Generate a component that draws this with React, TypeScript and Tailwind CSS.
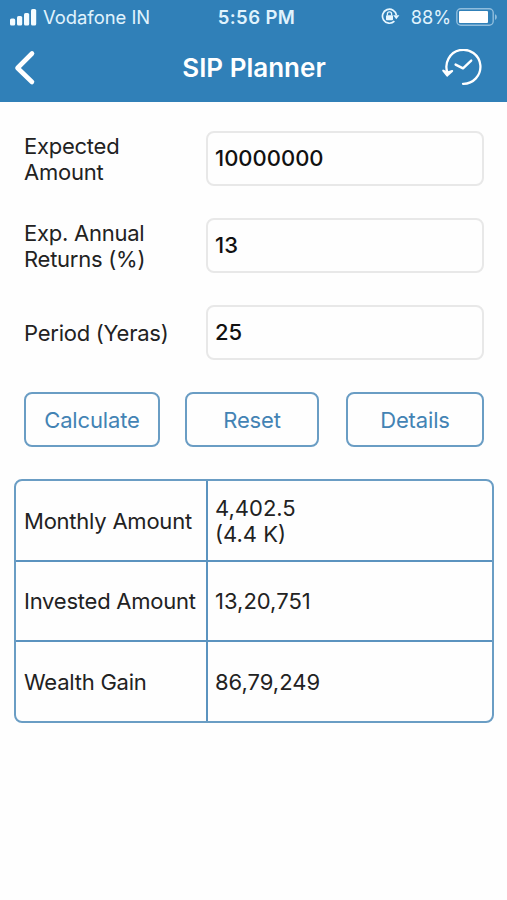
import { useState } from 'react';

interface Field {
  label: string;
  value: string;
}

const initialFields: Field[] = [
  { label: 'Expected Amount', value: '10000000' },
  { label: 'Exp. Annual Returns (%)', value: '13' },
  { label: 'Period (Yeras)', value: '25' },
];

const results = [
  { label: 'Monthly Amount', lines: ['4,402.5', '(4.4 K)'] },
  { label: 'Invested Amount', lines: ['13,20,751'] },
  { label: 'Wealth Gain', lines: ['86,79,249'] },
];

function StatusBar() {
  return (
    <div className="grid h-[34px] grid-cols-[1fr_auto_1fr] items-center pl-[10px] pr-[9px] text-[18px] leading-none text-[#e0f3fd]">
      <div className="flex items-center gap-[6px]">
        <svg width="27" height="17" viewBox="0 0 27 17" fill="#f4fcff">
          <rect x="0" y="9.5" width="5.2" height="7" rx="1.6" />
          <rect x="7" y="7" width="5.2" height="9.5" rx="1.6" />
          <rect x="14" y="4" width="5.2" height="12.5" rx="1.6" />
          <rect x="21" y="0" width="5.2" height="16.5" rx="1.6" />
        </svg>
        <span className="whitespace-nowrap text-[18.4px]">Vodafone IN</span>
      </div>
      <span className="pl-[5px] text-[18.5px] font-semibold tracking-[0.4px]">5:56 PM</span>
      <div className="flex items-center justify-end">
        <svg width="19" height="17" viewBox="0 0 19 17" fill="none">
          <path d="M13.4 13.2A7 7 0 1 1 15.4 7.2" stroke="#e6f6ff" strokeWidth="1.7" />
          <path d="M12.2 7.2h6.2l-3.1 4z" fill="#e6f6ff" />
          <rect x="5" y="7.2" width="7" height="5" rx="0.8" fill="#e6f6ff" />
          <path d="M6.4 7.5V5.9a2.1 2.1 0 0 1 4.2 0v1.6" stroke="#e6f6ff" strokeWidth="1.3" />
        </svg>
        <span className="ml-[11px] text-[18.2px]">88%</span>
        <svg className="ml-[5px]" width="42" height="18" viewBox="0 0 42 18" fill="none">
          <rect x="0.8" y="0.8" width="36.4" height="16.4" rx="4" stroke="#8fbddd" strokeWidth="1.4" />
          <rect x="3" y="3" width="29" height="12" rx="1" fill="#fff" />
          <path d="M39 6.2c2.4.8 2.4 4.8 0 5.6z" fill="#8fbddd" />
        </svg>
      </div>
    </div>
  );
}

function NavBar() {
  return (
    <div className="grid h-[67px] grid-cols-[1fr_auto_1fr] items-center pl-[14px] pr-[24px] text-white">
      <button aria-label="Back" className="justify-self-start">
        <svg width="22" height="36" viewBox="0 0 22 36" fill="none">
          <path d="M18 3.5 3.5 18 18 32" stroke="#fff" strokeWidth="4.6" strokeLinecap="round" strokeLinejoin="round" />
        </svg>
      </button>
      <h1 className="pl-[11px] text-[26px] font-semibold leading-none">SIP Planner</h1>
      <button aria-label="History" className="justify-self-end">
        <svg width="42" height="38" viewBox="0 0 42 38" fill="none" stroke="#fff" strokeLinecap="round" strokeLinejoin="round">
          <path d="M6.4 23.5A17 17 0 1 1 22 34.8" strokeWidth="2.3" />
          <path d="M2.2 21.6 6.2 26.6l5-4.6-4.8 1.4z" strokeWidth="2" fill="#fff" />
          <path d="M14.6 15.6 22 19.4 30.2 11.6" strokeWidth="2.4" />
        </svg>
      </button>
    </div>
  );
}

function ActionButton({ label, onClick }: { label: string; onClick?: () => void }) {
  return (
    <button onClick={onClick} className="h-[55px] rounded-[8px] border-2 border-[#6a9dc4] tracking-[-0.15px] text-[#4383b4]">
      {label}
    </button>
  );
}

export default function App() {
  const [fields, setFields] = useState(initialFields);

  const updateField = (index: number, value: string) => {
    setFields(fields.map((field, i) => (i === index ? { ...field, value } : field)));
  };

  return (
    <div className="min-h-screen w-full bg-[#fefefe] font-['Inter',sans-serif] text-[22px] leading-[26px] text-[#222]">
      <header className="h-[102px] bg-[#3080b8]">
        <StatusBar />
        <NavBar />
      </header>

      <main className="px-[14px] pt-[29px]">
        <div className="flex flex-col gap-8 px-[10px]">
          {fields.map((field, i) => (
            <label key={field.label} className="grid h-[55px] grid-cols-[182px_278px] items-center">
              <span className="max-w-[150px] tracking-[-0.25px]">{field.label}</span>
              <input
                value={field.value}
                onChange={(e) => updateField(i, e.target.value)}
                className="h-[55px] w-full rounded-[8px] border-2 border-[#e8e8e8] bg-transparent px-[7px] pb-px font-medium text-[#111] outline-none"
              />
            </label>
          ))}
        </div>

        <div className="mt-8 flex gap-[25px] pl-[10px]">
          <div className="grid w-[136px]">
            <ActionButton label="Calculate" />
          </div>
          <div className="grid w-[134px]">
            <ActionButton label="Reset" onClick={() => setFields(initialFields)} />
          </div>
          <div className="ml-[2px] grid w-[138px]">
            <ActionButton label="Details" />
          </div>
        </div>

        <div className="mt-8 h-[244px] w-[480px] rounded-[8px] border-2 border-[#6a9dc4] grid grid-rows-[81px_80px_79px]">
          {results.map((row) => (
            <div key={row.label} className="grid grid-cols-[192px_1fr] border-b-2 border-[#5b93bf] last:border-b-0">
              <div className="flex items-center whitespace-nowrap border-r-2 border-[#5b93bf] pl-2 tracking-[-0.23px]">
                {row.label}
              </div>
              <div className="flex flex-col justify-center pl-[7px]">
                {row.lines.map((line) => (
                  <span key={line}>{line}</span>
                ))}
              </div>
            </div>
          ))}
        </div>
      </main>
    </div>
  );
}
